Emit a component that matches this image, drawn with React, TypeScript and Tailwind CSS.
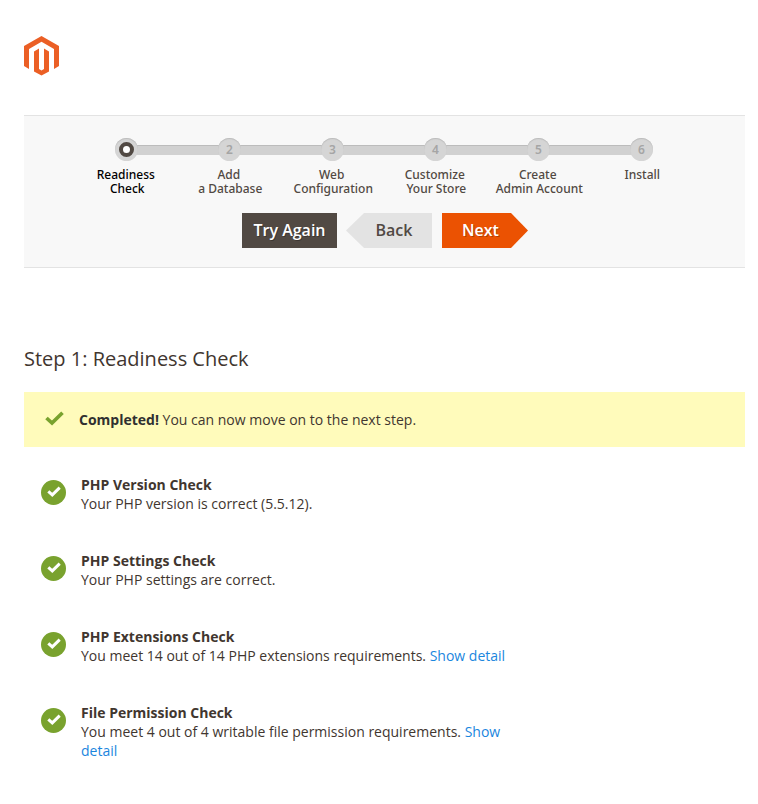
const steps: string[][] = [
  ['Readiness', 'Check'],
  ['Add', 'a Database'],
  ['Web', 'Configuration'],
  ['Customize', 'Your Store'],
  ['Create', 'Admin Account'],
  ['Install'],
];

const checks = [
  { title: 'PHP Version Check', text: 'Your PHP version is correct (5.5.12).', link: '' },
  { title: 'PHP Settings Check', text: 'Your PHP settings are correct.', link: '' },
  { title: 'PHP Extensions Check', text: 'You meet 14 out of 14 PHP extensions requirements.', link: 'Show detail' },
  { title: 'File Permission Check', text: 'You meet 4 out of 4 writable file permission requirements.', link: 'Show detail' },
];

function Logo() {
  return (
    <svg width="35" height="40" viewBox="0 0 35 40" fill="#eb5f25" className="block">
      <path d="M17.5 0 35 10v20l-5 3V13L17.5 5.8 5 13v20l-5-3V10Z" />
      <path d="m10 15.500 5-2.900V33l2.500 1.500L20 33V12.600l5 2.900v20L17.500 39.500 10 35.500Z" />
    </svg>
  );
}

function Connector({ visible }: { visible: boolean }) {
  return (
    <span
      className={`h-[10px] flex-1 ${visible ? 'border-t border-[#bcbcbc] bg-[#d1d1d1]' : ''}`}
    />
  );
}

function Progress() {
  return (
    <ol className="flex pl-[51px]">
      {steps.map((lines, i) => (
        <li key={lines[0]} className="w-[103px] shrink-0">
          <div className="flex h-[23px] items-center">
            <Connector visible={i > 0} />
            <span className="relative -mx-0.5 flex size-[23px] items-center justify-center rounded-full bg-[#d5d5d5] font-['Noto_Sans',sans-serif] text-[12px] font-semibold text-[#a5a5a5] shadow-[inset_0_1px_1px_#bcbcbc]">
              {i === 0 ? (
                <span className="size-[15px] rounded-full border-4 border-[#514943] bg-white" />
              ) : (
                i + 1
              )}
            </span>
            <Connector visible={i < 5} />
          </div>
          <div
            className={`mt-[7px] whitespace-nowrap text-center font-['Noto_Sans',sans-serif] text-[12px] font-medium leading-[14px] ${i === 0 ? 'text-black' : 'text-[#514943]'}`}
          >
            {lines.map((line, n) => (
              <div key={line} className={n < lines.length - 1 ? 'pr-[1.5px]' : 'pl-[1.5px]'}>
                {line}
              </div>
            ))}
          </div>
        </li>
      ))}
    </ol>
  );
}

export default function App() {
  return (
    <main className="h-[804px] w-[758px] overflow-hidden bg-white pl-6 pr-[13px] pt-9 font-['Open_Sans',sans-serif] text-[14px] leading-[19px] text-[#41362f]">
      <Logo />
      <section className="mt-[39px] h-[153px] border-y border-[#e3e3e3] bg-[#f8f8f8] pt-[22px]">
        <Progress />
        <div className="mt-[17px] flex gap-[10px] pl-[218px] text-[16px] font-semibold leading-[35px]">
          <button className="h-[35px] w-[95px] bg-[#514943] text-white [text-shadow:1px_1px_0_#00000040]">Try Again</button>
          <button className="-ml-px h-[35px] w-[86px] bg-[#e3e3e3] pl-[10px] text-[#514943] [clip-path:polygon(0_50%,18px_0,100%_0,100%_100%,18px_100%)]">
            Back
          </button>
          <button className="h-[35px] w-[86px] bg-[#eb5202] pr-[9px] text-white [clip-path:polygon(0_0,69px_0,100%_50%,69px_100%,0_100%)] [text-shadow:1px_1px_0_#00000040]">
            Next
          </button>
        </div>
      </section>

      <h1 className="mt-[77px] text-[20px] font-normal leading-7">Step 1: Readiness Check</h1>
      <div className="mt-[19px] flex h-[55px] items-center bg-[#fffbbb] pl-[21px]">
        <svg width="19" height="15" viewBox="0 0 19 15" className="mb-0.5 mr-[15px] shrink-0">
          <path d="m1.500 7 5.500 5L17.500 1.700" fill="none" stroke="#79a22e" strokeWidth="3.700" />
        </svg>
        <p>
          <strong className="font-bold text-[#303030]">Completed!</strong> You can now move on to the next step.
        </p>
      </div>

      <ul className="mt-[28px] flex flex-col gap-[38px] pl-[17px]">
        {checks.map((check) => (
          <li key={check.title} className="flex items-start">
            <svg width="25" height="25" viewBox="0 0 25 25" className="mr-[15px] mt-[5px] shrink-0">
              <circle cx="12.500" cy="12.500" r="12.500" fill="#79a22e" />
              <path d="m7.300 11.300 4 3.600 7.400-7.200" fill="none" stroke="white" strokeWidth="3" />
            </svg>
            <div className="w-[428px]">
              <h2 className="font-bold">{check.title}</h2>
              <p>
                {check.text}
                {check.link && (
                  <>
                    {' '}
                    <a className="text-[#1a86de]">{check.link}</a>
                  </>
                )}
              </p>
            </div>
          </li>
        ))}
      </ul>
    </main>
  );
}
